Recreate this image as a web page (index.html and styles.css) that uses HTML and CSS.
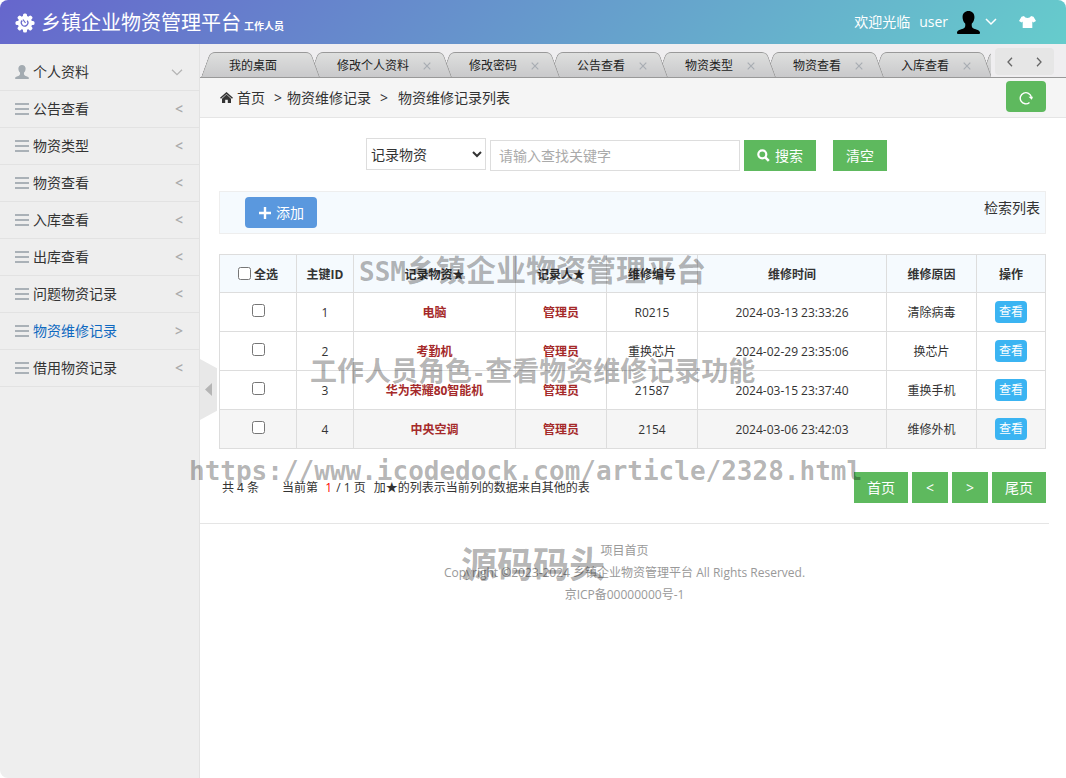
FILE: index.html
```html
<!DOCTYPE html>
<html lang="zh-CN">
<head>
<meta charset="utf-8">
<title>乡镇企业物资管理平台</title>
<link rel="stylesheet" href="styles.css">
</head>
<body>
<svg class="defs" width="0" height="0" aria-hidden="true">
  <symbol id="bars" viewBox="0 0 14 12"><path d="M0 1h14M0 6h14M0 11h14" stroke="#aab1b7" stroke-width="2"/></symbol>
  <symbol id="close" viewBox="0 0 8 8"><path d="M.7.7l6.6 6.6M7.3.7L.7 7.3" stroke="#a8adb3" stroke-width="1.200"/></symbol>
  <symbol id="person" viewBox="0 0 24 24"><path d="M12 0c3.700 0 6.200 2.600 6.200 6.200 0 2.600-.8 5.100-2.700 6.800-.5 2.600.1 4.600 1.800 5.300 3.300 1.300 6.300 1.500 6.700 4.200.1 1-.5 1.500-1.300 1.500H1.300C.5 24-.1 23.500 0 22.500c.4-2.700 3.400-2.900 6.700-4.200 1.700-.7 2.300-2.700 1.800-5.300C6.600 11.300 5.800 8.800 5.800 6.200 5.800 2.600 8.300 0 12 0z"/></symbol>
</svg>
<div class="page">
  <header class="topbar">
    <h1 class="brand">
      <svg class="brand-icon" viewBox="0 0 20 20"><g fill="#fff"><circle cx="10" cy="10" r="7.200"/><g id="teeth"><rect x="8" y="0.500" width="4" height="5" rx="1.500"/><rect x="8" y="14.500" width="4" height="5" rx="1.500"/><rect x="0.500" y="8" width="5" height="4" rx="1.500"/><rect x="14.500" y="8" width="5" height="4" rx="1.500"/></g><use href="#teeth" transform="rotate(45 10 10)"/></g><path d="M7.200 7.500a3.300 3.300 0 1 0 5 .2M8 6.500l2.500 3.500" fill="none" stroke="#6868cc" stroke-width="1.200"/></svg>
      <span>乡镇企业物资管理平台</span><small>工作人员</small>
    </h1>
    <div class="user">
      <span>欢迎光临</span><span>user</span>
      <svg class="avatar" viewBox="0 0 24 24"><use href="#person"/></svg>
      <svg class="down" viewBox="0 0 12 8"><path d="M1 1l5 5 5-5" fill="none" stroke="#fff" stroke-width="1.500"/></svg>
      <svg class="shirt" viewBox="0 0 17 12"><path d="M5 0c1 2.600 6 2.600 7 0l2.500.7L17 5l-2.700 1.500-1-1V12H3.700V5.500l-1 1L0 5 2.500.7z" fill="#fff"/></svg>
    </div>
  </header>
  <div class="body">
    <nav class="side">
      <a href="#"><svg class="ico" viewBox="0 0 24 24" fill="#a3abb1"><use href="#person"/></svg><span>个人资料</span><svg class="chev" viewBox="0 0 12 7"><path d="M1 .7l5 5 5-5" fill="none" stroke="#b4b4b4" stroke-width="1.300"/></svg></a>
      <a href="#"><svg class="ico bars"><use href="#bars"/></svg><span>公告查看</span><b>&lt;</b></a>
      <a href="#"><svg class="ico bars"><use href="#bars"/></svg><span>物资类型</span><b>&lt;</b></a>
      <a href="#"><svg class="ico bars"><use href="#bars"/></svg><span>物资查看</span><b>&lt;</b></a>
      <a href="#"><svg class="ico bars"><use href="#bars"/></svg><span>入库查看</span><b>&lt;</b></a>
      <a href="#"><svg class="ico bars"><use href="#bars"/></svg><span>出库查看</span><b>&lt;</b></a>
      <a href="#"><svg class="ico bars"><use href="#bars"/></svg><span>问题物资记录</span><b>&lt;</b></a>
      <a href="#" class="active"><svg class="ico bars"><use href="#bars"/></svg><span>物资维修记录</span><b>&gt;</b></a>
      <a href="#"><svg class="ico bars"><use href="#bars"/></svg><span>借用物资记录</span><b>&lt;</b></a>
      <button class="fold" aria-label="收起菜单"><svg viewBox="0 0 7 13"><path d="M7 0v13L0 6.500z" fill="#b5b5b5"/></svg></button>
    </nav>
    <main class="main">
      <div class="tabbar">
        <ul class="tabs">
          <li>我的桌面</li>
          <li>修改个人资料<svg><use href="#close"/></svg></li>
          <li>修改密码<svg><use href="#close"/></svg></li>
          <li>公告查看<svg><use href="#close"/></svg></li>
          <li>物资类型<svg><use href="#close"/></svg></li>
          <li>物资查看<svg><use href="#close"/></svg></li>
          <li>入库查看<svg><use href="#close"/></svg></li>
          <li></li>
        </ul>
        <div class="tabnav">
          <button aria-label="向左"><svg viewBox="0 0 6 10"><path d="M5 .8L1 5l4 4.200"/></svg></button>
          <button aria-label="向右"><svg viewBox="0 0 6 10"><path d="M1 .8L5 5 1 9.200"/></svg></button>
        </div>
      </div>
      <div class="crumbs">
        <svg class="home" viewBox="0 0 13 11"><path d="M6.500 0L13 5.700l-1 1-5.500-4.800L1 6.700l-1-1z"/><path d="M6.500 2.600L11 6.700V11H7.800V7.700H5.200V11H2V6.700z"/></svg>
        <a href="#">首页</a><i>&gt;</i><span>物资维修记录</span><i class="wide">&gt;</i><span>物资维修记录列表</span>
        <button class="green refresh" aria-label="刷新"><svg viewBox="0 0 14 14"><path d="M10.500 11.500A5.600 5.600 0 1 1 12.300 6" fill="none" stroke="#fff" stroke-width="1.400"/><path d="M9.500 5.700h4.500l-1.200 3z" fill="#fff"/></svg></button>
      </div>
      <div class="content">
        <form class="search">
          <select aria-label="查找字段"><option>记录物资</option></select>
          <input type="text" placeholder="请输入查找关键字" aria-label="关键字">
          <button type="button" class="green"><svg class="lens" viewBox="0 0 13 13"><circle cx="5.300" cy="5.300" r="4" fill="none" stroke="#fff" stroke-width="2.200"/><path d="M8.300 8.300l3.500 3.500" stroke="#fff" stroke-width="2.600"/></svg>搜索</button>
          <button type="reset" class="green clear">清空</button>
        </form>
        <div class="tools">
          <button class="add"><svg viewBox="0 0 12 12"><path d="M6 0v12M0 6h12" stroke="#fff" stroke-width="2.400"/></svg>添加</button>
          <span>检索列表</span>
        </div>
        <div class="tablewrap">
        <table>
          <colgroup><col class="c1"><col class="c2"><col class="c3"><col class="c4"><col class="c4"><col class="c5"><col class="c6"><col class="c7"></colgroup>
          <thead><tr><th><label><input type="checkbox">全选</label></th><th>主键ID</th><th>记录物资★</th><th>记录人★</th><th>维修编号</th><th>维修时间</th><th>维修原因</th><th>操作</th></tr></thead>
          <tbody>
            <tr><td><input type="checkbox" aria-label="选择 1"></td><td>1</td><td class="red">电脑</td><td class="red">管理员</td><td>R0215</td><td>2024-03-13 23:33:26</td><td>清除病毒</td><td><button class="view">查看</button></td></tr>
            <tr><td><input type="checkbox" aria-label="选择 2"></td><td>2</td><td class="red">考勤机</td><td class="red">管理员</td><td>重换芯片</td><td>2024-02-29 23:35:06</td><td>换芯片</td><td><button class="view">查看</button></td></tr>
            <tr><td><input type="checkbox" aria-label="选择 3"></td><td>3</td><td class="red">华为荣耀80智能机</td><td class="red">管理员</td><td>21587</td><td>2024-03-15 23:37:40</td><td>重换手机</td><td><button class="view">查看</button></td></tr>
            <tr class="hover"><td><input type="checkbox" aria-label="选择 4"></td><td>4</td><td class="red">中央空调</td><td class="red">管理员</td><td>2154</td><td>2024-03-06 23:42:03</td><td>维修外机</td><td><button class="view">查看</button></td></tr>
          </tbody>
        </table>
        </div>
        <div class="pager">
          <p><span>共 4 条</span><span>当前第 <em>1</em> / 1 页</span><span>加★的列表示当前列的数据来自其他的表</span></p>
          <button class="green">首页</button><button class="green">&lt;</button><button class="green">&gt;</button><button class="green">尾页</button>
        </div>
      </div>
      <footer class="footer">
        <a href="#">项目首页</a>
        <p>Copyright ©2023-2024 乡镇企业物资管理平台 All Rights Reserved.</p>
        <p>京ICP备00000000号-1</p>
      </footer>
    </main>
  </div>
  <div class="mark m1"><span>SSM</span>乡镇企业物资管理平台</div>
  <div class="mark m2">工作人员角色<span>-</span>查看物资维修记录功能</div>
  <div class="mark m3">https://www.icodedock.com/article/2328.html</div>
  <div class="mark m4">源码码头</div>
</div>
</body>
</html>
```
FILE: styles.css
```css
* { box-sizing: border-box; }
body {
  margin: 0;
  background: #fff;
  color: #333;
  font: 14px/20px "Open Sans", "Noto Sans CJK SC", sans-serif;
}
button, input, select { font: inherit; color: inherit; margin: 0; }
button { border: 0; padding: 0; cursor: pointer; }
a { color: inherit; text-decoration: none; }
p { margin: 0; }
svg { flex: none; }
.defs { position: absolute; }
.page {
  position: relative;
  display: flex;
  flex-direction: column;
  min-height: 100vh;
  border-radius: 8px;
  overflow: hidden;
}

.topbar {
  display: flex;
  align-items: center;
  justify-content: space-between;
  height: 44px;
  padding: 0 30px 0 15px;
  color: #fff;
  background: linear-gradient(135deg, #66c, #6cc);
}
.brand { display: flex; align-items: center; margin: 0; padding-top: 2px; font-size: 20px; font-weight: 400; }
.brand-icon { width: 20px; height: 20px; margin-right: 6px; }
.brand small { margin: 6px 0 0 3px; font-size: 10px; font-weight: 600; }
.user { display: flex; align-items: center; gap: 9px; }
.avatar { width: 23px; height: 23px; }
.down { width: 12px; height: 8px; margin-left: -4px; }
.shirt { width: 17px; height: 12px; margin-left: 13px; }

.body { display: flex; flex: 1; }
.side {
  position: relative;
  flex: none;
  width: 200px;
  padding-top: 10px;
  background: #eee;
  border-right: 1px solid #e2e2e2;
}
.side a {
  display: flex;
  align-items: center;
  height: 37px;
  padding: 0 16px 0 15px;
  border-bottom: 1px solid #e2e2e2;
}
.side .ico { width: 14px; height: 14px; margin-right: 4px; }
.side .bars { height: 12px; }
.side span { flex: 1; }
.side b { color: #aaa; font-size: 14px; font-weight: 600; }
.chev { width: 12px; height: 7px; }
.side .active { color: #0f69c0; }
.fold {
  position: absolute;
  z-index: 2;
  left: 200px;
  top: 315px;
  display: grid;
  place-items: center;
  width: 17px;
  height: 61px;
  background: #e8e8e8;
  clip-path: polygon(0 0, 100% 15%, 100% 85%, 0 100%);
}
.fold svg { width: 7px; height: 13px; }

.main { flex: 1; min-width: 0; }
.tabbar {
  display: flex;
  height: 34px;
  padding: 4px 12px 0 1px;
  background: #efeef0;
  border-bottom: 1px solid #999;
}
.tabs {
  display: flex;
  flex: 1;
  min-width: 0;
  margin: 0 4px 0 0;
  padding: 4px 0 0;
  list-style: none;
  overflow: hidden;
  font-size: 12px;
}
.tabs li {
  position: relative;
  z-index: 1;
  display: flex;
  align-items: center;
  flex: none;
  min-width: 119px;
  height: 25px;
  margin-right: -11px;
  padding: 2px 21px 0 28px;
  color: #222;
}
.tabs li:nth-child(1) { z-index: 8; }
.tabs li:nth-child(2) { z-index: 7; }
.tabs li:nth-child(3) { z-index: 6; }
.tabs li:nth-child(4) { z-index: 5; }
.tabs li:nth-child(5) { z-index: 4; }
.tabs li:nth-child(6) { z-index: 3; }
.tabs li:nth-child(7) { z-index: 2; }
.tabs li svg { width: 8px; height: 8px; margin-left: 14px; }
.tabs li::before, .tabs li::after {
  content: "";
  position: absolute;
  z-index: -1;
  top: 0;
  bottom: 0;
  border: 1px solid #999;
  border-bottom: 0;
  background: linear-gradient(#dedfde, #c9c9cb);
}
.tabs li::before {
  left: 0;
  right: 50%;
  border-right: 0;
  border-radius: 5px 0 0 0;
  transform: skewX(-20deg);
  transform-origin: bottom left;
}
.tabs li::after {
  left: 40%;
  right: 0;
  border-left: 0;
  border-radius: 0 5px 0 0;
  transform: skewX(20deg);
  transform-origin: bottom right;
}
.tabnav {
  display: flex;
  width: 59px;
  height: 27px;
  background: #e6e6e6;
  border-radius: 4px;
}
.tabnav button { flex: 1; background: none; }
.tabnav svg { width: 6px; height: 10px; fill: none; stroke: #666; stroke-width: 1.3; }

.crumbs {
  display: flex;
  align-items: center;
  height: 40px;
  padding: 0 20px;
  background: #f5f5f5;
  border-bottom: 1px solid #e5e5e5;
}
.home { width: 13px; height: 11px; margin-right: 4px; fill: #333; }
.crumbs i { margin: 0 5px 0 9px; font-style: normal; }
.crumbs .wide { margin-right: 10px; }
.green {
  min-width: 36px;
  height: 31px;
  padding: 0 13px;
  color: #fff;
  background: #5eb95e;
}
.refresh { margin: 0 0 2px auto; border-radius: 4px; }
.refresh svg, .lens, .add svg { vertical-align: middle; }
.refresh svg { width: 14px; height: 14px; }

.content { padding: 20px 20px 20px 19px; }
.search {
  display: flex;
  align-items: center;
  justify-content: center;
  gap: 4px;
  margin: 0 12px 20px 0;
}
.search select {
  width: 120px;
  height: 32px;
  margin-bottom: 1px;
  border: 1px solid #ddd;
  background: #fff;
}
.search input {
  width: 250px;
  height: 31px;
  margin-top: 2px;
  padding: 0 8px;
  border: 1px solid #ddd;
}
.search input::placeholder { color: #aaa; }
.search button { margin-top: 2px; }
.search .clear { margin-left: 13px; }
.lens { width: 13px; height: 13px; margin: 0 5px 2px 0; }
.tools {
  display: flex;
  align-items: flex-start;
  justify-content: space-between;
  height: 43px;
  padding: 5px 5px 0 25px;
  background: #f5fafe;
  border: 1px solid #eee;
}
.tools span { padding-top: 1px; }
.add {
  height: 31px;
  padding: 0 13px 0 14px;
  color: #fff;
  background: #5a98de;
  border-radius: 4px;
}
.add svg { width: 12px; height: 12px; margin: 0 5px 2px 0; }

.tablewrap { margin: 20px 0 23px; }
table {
  width: 100%;
  table-layout: fixed;
  border-collapse: collapse;
  text-align: center;
  font-size: 12px;
}
th, td { height: 39px; padding: 2px 0 0; border: 1px solid #ddd; }
th { height: 38px; background: #f5fafe; font-weight: 700; }
td:first-child, td:last-child { padding: 0; }
.c1 { width: 77px; }
.c2 { width: 57px; }
.c3 { width: 162px; }
.c4 { width: 91px; }
.c5 { width: 189px; }
.c6 { width: 90px; }
.c7 { width: 69px; }
table input { width: 13px; height: 13px; vertical-align: middle; margin-bottom: 4px; }
th input { margin: 0 3px 3px 0; }
.red { color: brown; font-weight: 700; }
.hover { background: #f5f5f5; }
.view {
  width: 32px;
  height: 22px;
  color: #fff;
  background: #3bb4f2;
  border-radius: 4px;
}

.pager { display: flex; align-items: center; gap: 4px; }
.pager p { display: flex; flex: 1; padding-left: 3px; font-size: 12px; }
.pager span:first-child { margin-right: 23px; }
.pager span:last-child { margin-left: 8px; }
.pager em { margin: 0 1px 0 4px; color: red; font-style: normal; }

.footer {
  margin-right: 17px;
  padding-top: 16px;
  border-top: 1px solid #e5e5e5;
  color: #999;
  text-align: center;
  font-size: 12px;
  line-height: 22px;
}

.mark {
  position: absolute;
  z-index: 5;
  color: rgba(0, 0, 0, 0.3);
  font-family: "Noto Sans CJK SC", sans-serif;
  font-weight: 700;
  line-height: 40px;
  white-space: nowrap;
  pointer-events: none;
}
.mark span, .m3 { font-family: "DejaVu Sans Mono", monospace; }
.m1 { left: 359px; top: 248px; font-size: 30px; }
.m1 span { font-size: 26px; }
.m2 { left: 310px; top: 350px; font-size: 27px; }
.m2 span { font-size: 22px; }
.m3 { left: 189px; top: 451px; font-size: 26px; }
.m4 { left: 461px; top: 542px; font-size: 36px; }
```
